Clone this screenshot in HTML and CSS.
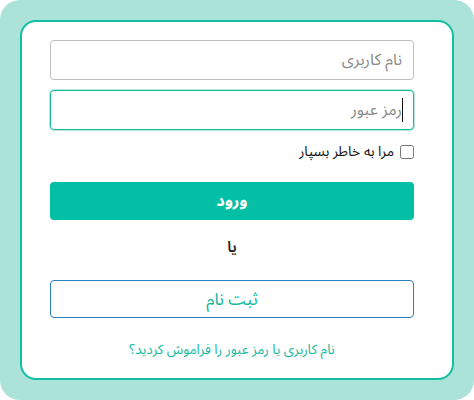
FILE: index.html
```html
<!DOCTYPE html>
<html lang="fa" dir="rtl">
<head>
  <meta charset="UTF-8">
  <meta name="viewport" content="width=device-width, initial-scale=1.0">
  <title>ورود</title>
  <link rel="stylesheet" href="styles.css">
</head>
<body>
  <div class="page">
    <form class="login-card">
      <input class="field" type="text" placeholder="نام کاربری">
      <div class="field-wrap">
        <input class="field field-focus" type="password" placeholder="رمز عبور">
        <span class="caret"></span>
      </div>
      <label class="remember">
        <input type="checkbox">
        <span>مرا به خاطر بسپار</span>
      </label>
      <button type="button" class="btn-login">ورود</button>
      <p class="or">یا</p>
      <button type="button" class="btn-register">ثبت نام</button>
      <a href="#" class="forgot">نام کاربری یا رمز عبور را فراموش کردید؟</a>
    </form>
  </div>
</body>
</html>
```

FILE: styles.css
```css
html, body {
  margin: 0;
  padding: 0;
  background: #fff;
}
body {
  font-family: 'Noto Sans Arabic', 'DejaVu Sans', sans-serif;
  color: #222;
}
.page {
  width: 474px;
  height: 400px;
  box-sizing: border-box;
  padding: 20px;
  background: #abe3d8;
  border-radius: 20px;
}
.login-card {
  box-sizing: border-box;
  height: 360px;
  padding: 18px 38px 0 28px;
  background: #fff;
  border: 2px solid #0fbfa3;
  border-radius: 16px;
  display: flex;
  flex-direction: column;
}
.field {
  display: block;
  box-sizing: border-box;
  width: 100%;
  height: 40px;
  padding: 0 11px;
  margin-bottom: 10px;
  border: 1px solid #bdbdbd;
  border-radius: 4px;
  font-family: inherit;
  font-size: 16px;
  color: #333;
  outline: none;
}
.field::placeholder {
  color: #8a8a8a;
}
.field-wrap {
  position: relative;
}
.field-focus {
  border-color: #17b99c;
  box-shadow: 0 0 0 1px #b9e9de;
}
.caret {
  position: absolute;
  right: 11px;
  top: 8px;
  width: 1px;
  height: 24px;
  background: #111;
}
.remember {
  display: flex;
  align-items: center;
  gap: 6px;
  font-size: 14px;
  color: #111;
  margin-top: -3px;
}
.remember input {
  width: 14px;
  height: 14px;
  margin: 0;
}
.btn-login {
  margin-top: 16px;
  height: 38px;
  border: none;
  border-radius: 4px;
  background: #02bfa6;
  color: #fff;
  font-family: inherit;
  font-size: 16px;
  font-weight: bold;
}
.or {
  margin: 15px 0 0;
  text-align: center;
  font-size: 15px;
  font-weight: 600;
  line-height: 24px;
}
.btn-register {
  margin-top: 21px;
  height: 38px;
  border: 1px solid #2b80c0;
  border-radius: 4px;
  background: #fff;
  color: #10b89a;
  font-family: inherit;
  font-size: 17px;
}
.forgot {
  margin-top: 17px;
  text-align: center;
  font-size: 13.5px;
  color: #14b99c;
  text-decoration: none;
}
```
